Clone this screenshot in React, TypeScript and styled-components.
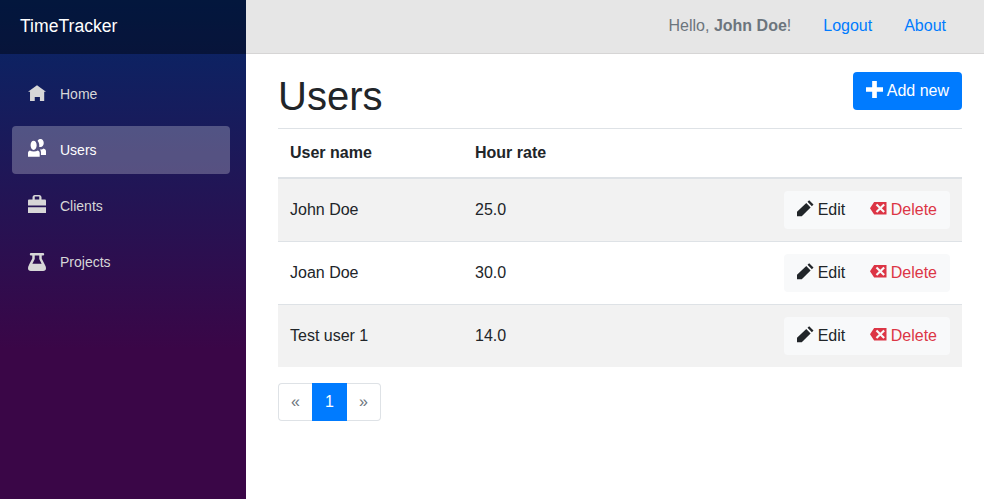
import React from "react";
import styled, { createGlobalStyle } from "styled-components";

const GlobalStyle = createGlobalStyle`
  *, *::before, *::after { box-sizing: border-box; }
  body {
    margin: 0;
    background: #fff;
    color: #212529;
    font: 400 16px/24px "Liberation Sans", Arial, sans-serif;
    overflow: hidden;
  }
`;

const icons = {
  home: "M4 1l-4 2.9h.9v4.1h2.1v-1.8h2.3v1.8h1.9v-4.1h.8l-4-2.9z",
  people:
    "M5.6 0c-.6 0-1.1.3-1.35.85.5.45.75 1.15.75 1.95 0 .25-.02.45-.07.65.2.1.42.15.67.15.85 0 1.4-.8 1.4-1.8s-.55-1.8-1.4-1.8zm-3.1.8c-.8 0-1.35.9-1.35 2s.55 2.1 1.35 2.1 1.35-1 1.35-2.1-.55-2-1.35-2zm4.4 3.4c-.3.35-.75.5-1.3.5-.1 0-.2 0-.3-.02.3.32.45.75.45 1.22v1.2h2.25v-1.7c0-.55-.4-1-1.1-1.2zm-6.1.9c-.5.2-.8.6-.8 1.2v1.6h5.2v-1.6c0-.6-.3-1-.8-1.2-.5.3-1.1.5-1.8.5s-1.3-.2-1.8-.5z",
  briefcase:
    "M3 0c-.55 0-1 .45-1 1v1h-1.5c-.28 0-.5.22-.5.5v2.2h8v-2.2c0-.28-.22-.5-.5-.5h-1.5v-1c0-.55-.45-1-1-1h-2zm0 .7h2v1.3h-2v-1.3zm-3 4.7v2.6h8v-2.6h-8z",
  beaker:
    "M1.34 0a.55.55 0 0 0 0 1.1h.56v1.31c-.21.42-1.06 2.04-1.56 3.15-.2.38-.34.78-.34 1.19 0 .75.5 1.25 1.25 1.25h5.5c.75 0 1.25-.5 1.25-1.25 0-.41-.14-.81-.34-1.19-.5-1.11-1.35-2.73-1.56-3.15v-1.31h.56a.55.55 0 1 0 0-1.1h-5.32zm1.66 1.1h2v1.53l1.05 2.17h-4.1l1.05-2.17v-1.53z",
  plus: "M2.9 0v2.9h-2.9v2.2h2.9v2.9h2.2v-2.9h2.9v-2.2h-2.9v-2.9h-2.2z",
  pencil: "M5.9.1l-.8.8 2.1 2.1.8-.8-2.1-2.1zm-1.4 1.4l-4.5 4.2v2.2h2.3l4.3-4.3-2.1-2.1z",
  remove:
    "M2 1l-2 3 2 3h6v-6h-6zm1.5.78l1.5 1.5 1.5-1.5.72.72-1.5 1.5 1.5 1.5-.72.72-1.5-1.5-1.5 1.5-.72-.72 1.5-1.5-1.5-1.5.72-.72z",
};
type IconName = keyof typeof icons;

const Glyph = styled.svg<{ $size: number; $drop: number }>`
  display: block;
  flex: none;
  width: ${(p) => p.$size}px;
  height: ${(p) => p.$size}px;
  margin-top: ${(p) => p.$drop}px;
  fill: currentColor;
`;
const Icon = ({ name, size = 16, drop = 0 }: { name: IconName; size?: number; drop?: number }) => (
  <Glyph viewBox="0 0 8 8" $size={size} $drop={drop} aria-hidden="true">
    <path d={icons[name]} />
  </Glyph>
);

const Layout = styled.div`
  display: flex;
  height: 499px;
`;
const Sidebar = styled.aside`
  flex: 0 0 246px;
  background: linear-gradient(180deg, rgb(5, 39, 103) 0%, #3a0647 70%);
`;
const Brand = styled.div`
  height: 54px;
  padding: 13px 20px 0;
  background: rgba(0, 0, 0, 0.4);
  color: #fff;
  font-size: 17.6px;
  line-height: 27px;
`;
const Nav = styled.nav`
  display: flex;
  flex-direction: column;
  gap: 8px;
  padding: 16px 16px 0 12px;
`;
const NavItem = styled.a<{ $active?: boolean }>`
  display: flex;
  align-items: flex-start;
  gap: 14px;
  height: 48px;
  padding: 13px 16px 0;
  border-radius: 4px;
  font-size: 14px;
  line-height: 22px;
  text-decoration: none;
  color: ${(p) => (p.$active ? "#fff" : "#d7d7d7")};
  background: ${(p) => (p.$active ? "rgba(255, 255, 255, 0.25)" : "transparent")};
`;
const Main = styled.main`
  flex: 1;
  min-width: 0;
`;
const TopBar = styled.header`
  display: flex;
  justify-content: flex-end;
  gap: 32px;
  height: 54px;
  padding: 14px 38px 0 0;
  background: #e6e6e6;
  border-bottom: 1px solid #d6d5d5;
`;
const Greeting = styled.span`
  color: #6c757d;
`;
const TopLink = styled.a`
  color: #007bff;
  text-decoration: none;
`;
const Content = styled.section`
  padding: 18px 22px 0 32px;
`;
const Heading = styled.div`
  display: flex;
  justify-content: space-between;
  height: 56px;
`;
const Title = styled.h1`
  margin: 0;
  font-size: 40px;
  font-weight: 400;
  line-height: 48px;
`;
const Button = styled.button<{ $tone: "primary" | "light" | "danger" }>`
  display: flex;
  align-items: flex-start;
  gap: 4px;
  height: 38px;
  padding: 7px 13px;
  border: 0;
  border-radius: 4px;
  font: inherit;
  color: ${(p) => ({ primary: "#fff", light: "#212529", danger: "#dc3545" })[p.$tone]};
  background: ${(p) => (p.$tone === "primary" ? "#007bff" : "#f8f9fa")};
`;
const ButtonGroup = styled.div`
  display: inline-flex;
  vertical-align: top;
  ${Button} + ${Button} { border-radius: 0 4px 4px 0; padding-left: 12px; }
  ${Button}:first-child { border-radius: 4px 0 0 4px; padding-right: 13px; }
`;
const Table = styled.table`
  width: 100%;
  table-layout: fixed;
  border-spacing: 0;
  margin-bottom: 16px;
`;
const HeadCell = styled.th<{ $width?: number }>`
  width: ${(p) => (p.$width ? `${p.$width}px` : "auto")};
  height: 51px;
  padding: 12px;
  border-top: 1px solid #dee2e6;
  border-bottom: 2px solid #dee2e6;
  text-align: left;
`;
const Row = styled.tr`
  &:nth-child(odd) { background: #f2f2f2; }
  &:first-child td { border-top: 0; height: 62px; padding-top: 12px; }
`;
const Cell = styled.td<{ $actions?: boolean }>`
  height: 63px;
  padding: 12px;
  border-top: 1px solid #dee2e6;
  text-align: ${(p) => (p.$actions ? "right" : "left")};
`;
const Pagination = styled.nav`
  display: flex;
`;
const PageLink = styled.a<{ $active?: boolean }>`
  width: 35px;
  height: 38px;
  padding: 6px 0;
  border: 1px solid ${(p) => (p.$active ? "#007bff" : "#dee2e6")};
  text-align: center;
  color: ${(p) => (p.$active ? "#fff" : "#6c757d")};
  background: ${(p) => (p.$active ? "#007bff" : "#fff")};
  &:first-child { border-radius: 4px 0 0 4px; border-right: 0; width: 34px; }
  &:last-child { border-radius: 0 4px 4px 0; border-left: 0; width: 34px; }
`;

const navigation: { label: string; icon: IconName; drop?: number }[] = [
  { label: "Home", icon: "home" },
  { label: "Users", icon: "people" },
  { label: "Clients", icon: "briefcase" },
  { label: "Projects", icon: "beaker", drop: 2 },
];
const users = [
  { name: "John Doe", rate: "25.0" },
  { name: "Joan Doe", rate: "30.0" },
  { name: "Test user 1", rate: "14.0" },
];

export default function App() {
  return (
    <>
      <GlobalStyle />
      <Layout>
        <Sidebar>
          <Brand>TimeTracker</Brand>
          <Nav>
            {navigation.map((item) => (
              <NavItem key={item.label} $active={item.label === "Users"}>
                <Icon name={item.icon} size={18} drop={item.drop} />
                {item.label}
              </NavItem>
            ))}
          </Nav>
        </Sidebar>
        <Main>
          <TopBar>
            <Greeting>
              Hello, <strong>John Doe</strong>!
            </Greeting>
            <TopLink>Logout</TopLink>
            <TopLink>About</TopLink>
          </TopBar>
          <Content>
            <Heading>
              <Title>Users</Title>
              <Button $tone="primary">
                <Icon name="plus" size={17} drop={2} />
                Add new
              </Button>
            </Heading>
            <Table>
              <thead>
                <tr>
                  <HeadCell $width={185}>User name</HeadCell>
                  <HeadCell $width={180}>Hour rate</HeadCell>
                  <HeadCell />
                </tr>
              </thead>
              <tbody>
                {users.map((user) => (
                  <Row key={user.name}>
                    <Cell>{user.name}</Cell>
                    <Cell>{user.rate}</Cell>
                    <Cell $actions>
                      <ButtonGroup>
                        <Button $tone="light">
                          <Icon name="pencil" size={16.5} drop={2} />
                          Edit
                        </Button>
                        <Button $tone="danger">
                          <Icon name="remove" size={16.5} drop={2} />
                          Delete
                        </Button>
                      </ButtonGroup>
                    </Cell>
                  </Row>
                ))}
              </tbody>
            </Table>
            <Pagination>
              <PageLink>«</PageLink>
              <PageLink $active>1</PageLink>
              <PageLink>»</PageLink>
            </Pagination>
          </Content>
        </Main>
      </Layout>
    </>
  );
}
